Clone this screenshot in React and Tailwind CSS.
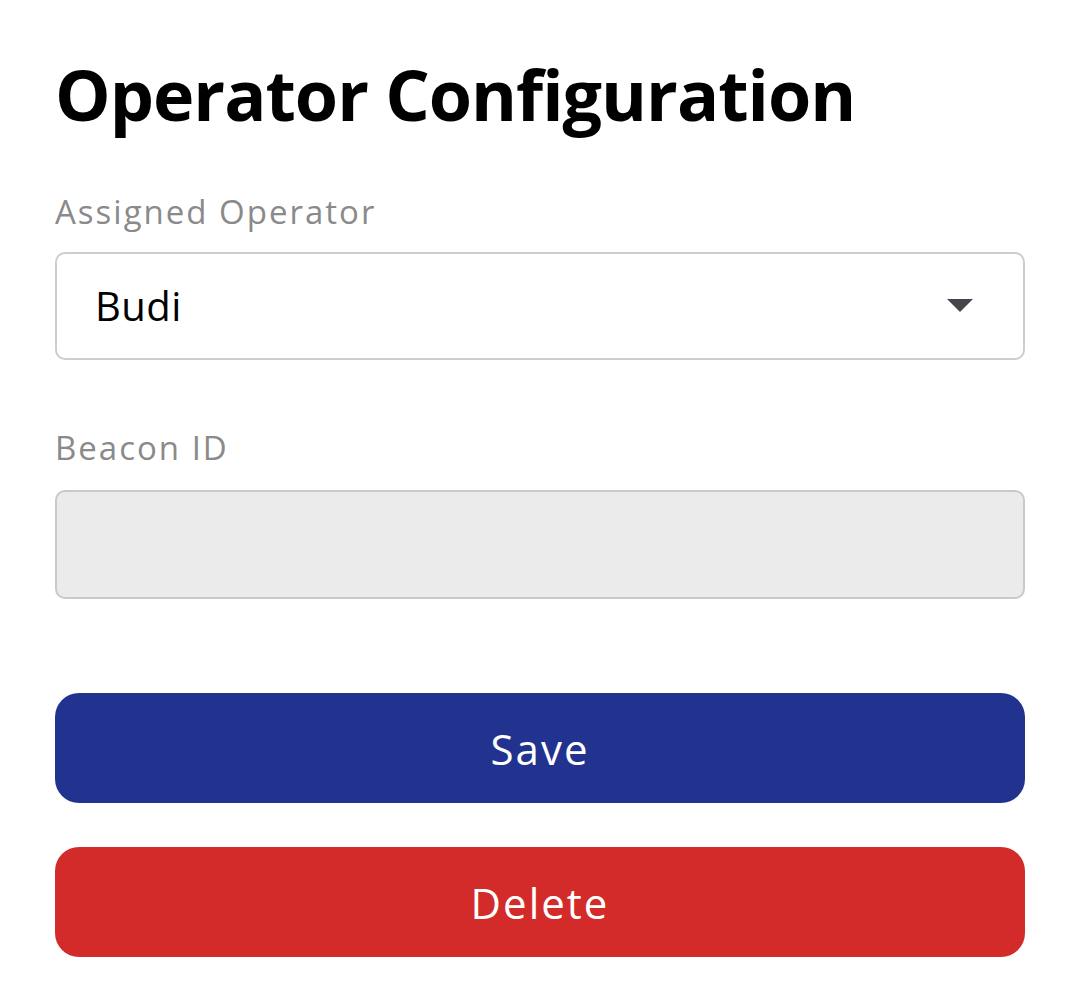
export default function App() {
  return (
    <div
      className="min-h-[999px] bg-white px-[55px] pt-[52px]"
      style={{ fontFamily: '"Open Sans", "Liberation Sans", sans-serif' }}
    >
      <h1 className="text-[70px] font-bold leading-[84px] text-black tracking-[-1px]">
        Operator Configuration
      </h1>

      <label className="mt-[54px] block text-[33px] leading-[44px] tracking-[2px] text-[#8a8a8a]">Assigned Operator</label>
      <div className="mt-[18px] flex h-[108px] items-center justify-between rounded-[10px] border-2 border-[#cdcdcd] bg-white pl-[38px] pr-[50px]">
        <span className="text-[40px] font-medium text-black tracking-[0.5px]">Budi</span>
        <svg width="26" height="14" viewBox="0 0 26 14">
          <path d="M0 0 H26 L13 13 Z" fill="#46454e" />
        </svg>
      </div>

      <label className="mt-[66px] block text-[33px] leading-[44px] tracking-[2px] text-[#8a8a8a]">Beacon ID</label>
      <div className="mt-[20px] h-[109px] rounded-[10px] border-2 border-[#c9c9c9] bg-[#ebebeb]" />

      <button className="mt-[94px] flex h-[110px] w-full items-center justify-center rounded-[24px] bg-[#22338f] text-[42px] font-medium tracking-[2px] text-white">
        Save
      </button>
      <button className="mt-[44px] flex h-[110px] w-full items-center justify-center rounded-[24px] bg-[#d32a2a] text-[42px] font-medium tracking-[2px] text-white">
        Delete
      </button>
    </div>
  )
}
